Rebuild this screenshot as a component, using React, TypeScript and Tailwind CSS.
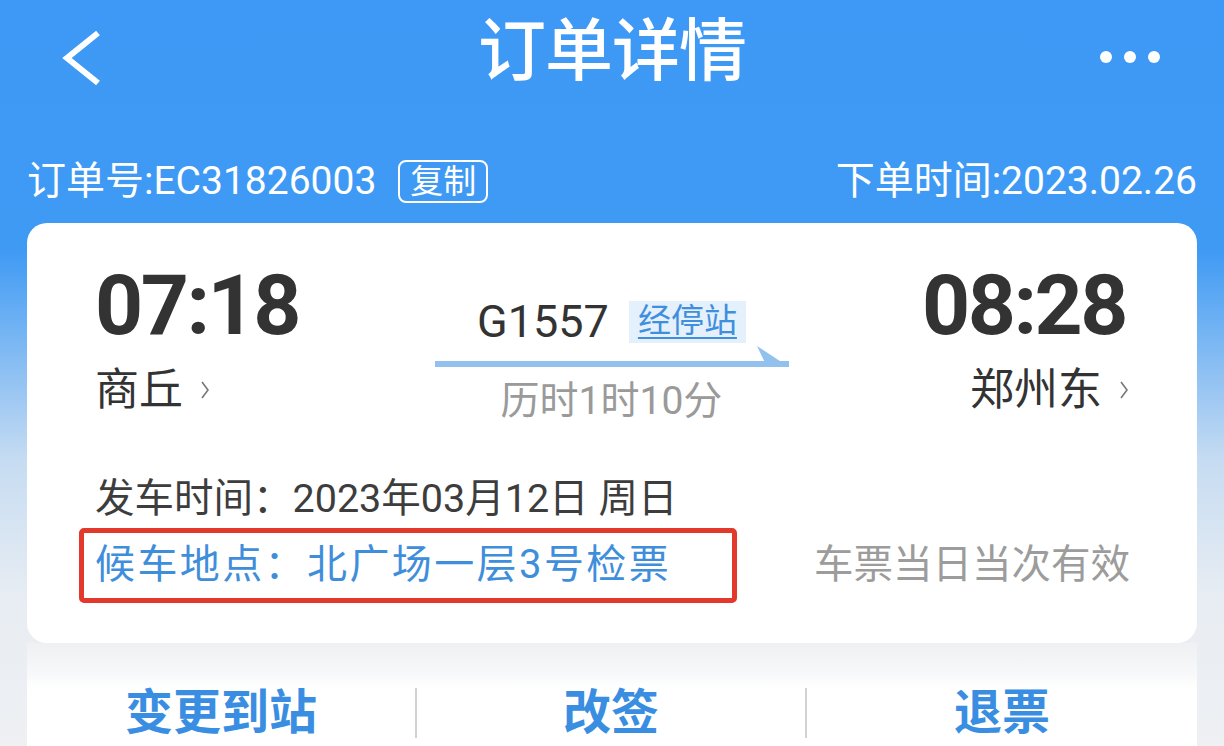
const FONT = "font-['Roboto','Noto_Sans_CJK_SC',sans-serif]"

function BackIcon() {
  return (
    <svg className="w-[44px] h-[60px] ml-[3px]" viewBox="0 0 44 60" fill="none" stroke="white" strokeWidth="6" strokeLinejoin="miter">
      <path d="M39 5L8 30l31 25" />
    </svg>
  )
}

function SmallChevron() {
  return (
    <svg className="w-[12px] h-[22px] ml-[16px]" viewBox="0 0 12 22" fill="none" stroke="#777" strokeWidth="1.6">
      <path d="M3 3l6 8-6 8" />
    </svg>
  )
}

function TrainArrow() {
  return (
    <svg className="w-[354px] h-[22px] mt-[2px]" viewBox="0 0 354 22" fill="#92c1ee">
      <rect x="0" y="15" width="354" height="6" />
      <polygon points="322,0 354,21 332,21" />
    </svg>
  )
}

export default function App() {
  return (
    <div className={`${FONT} w-[1224px] h-[746px] overflow-hidden bg-[linear-gradient(180deg,#3d99f5_0px,#3f9af4_250px,#c6dcf2_460px,#e8edf3_600px,#eef0f3_746px)]`}>
      {/* Header */}
      <div className="h-[115px] flex items-center justify-between pl-[56px] pr-[56px] relative">
        <BackIcon />
        <h1 className="absolute left-1/2 -translate-x-1/2 top-[18px] text-white text-[68px] leading-none font-medium tracking-[-1px]">订单详情</h1>
        <div className="flex gap-[12px] mr-[8px] -mt-[2px]">
          <span className="w-[12px] h-[12px] rounded-full bg-white" />
          <span className="w-[12px] h-[12px] rounded-full bg-white" />
          <span className="w-[12px] h-[12px] rounded-full bg-white" />
        </div>
      </div>

      {/* Order number row */}
      <div className="mt-[33px] h-[66px] px-[27px] flex items-center justify-between text-white text-[39px] leading-none">
        <div className="flex items-center">
          <span>订单号:EC31826003</span>
          <span className="ml-[22px] border-[2.5px] border-white rounded-[8px] px-[10px] py-[3px] text-[33px] leading-none">复制</span>
        </div>
        <span>下单时间:2023.02.26</span>
      </div>

      {/* Ticket card */}
      <div className="mt-[9px] mx-[27px] bg-white rounded-[20px] pt-[41px] pl-[68px] pr-[69px] h-[420px]">
        <div className="grid grid-cols-[1fr_354px_1fr]">
          <div>
            <p className="text-[#333] text-[84px] font-bold leading-none tracking-[-2.5px]">07:18</p>
            <div className="mt-[20px] flex items-center text-[#333] text-[44px] leading-none">
              商丘
              <SmallChevron />
            </div>
          </div>

          <div className="flex flex-col items-center pt-[35px]">
            <div className="flex items-center">
              <span className="text-[#333] text-[45px] leading-none">G1557</span>
              <span className="ml-[20px] bg-[#e4f0fc] px-[9px] pt-[3px] pb-[6px] text-[#3f8fdc] text-[33px] leading-none underline underline-offset-[5px] decoration-[2px]">经停站</span>
            </div>
            <TrainArrow />
            <p className="mt-[14px] text-[#9a9a9a] text-[39px] leading-none">历时1时10分</p>
          </div>

          <div className="flex flex-col items-end">
            <p className="text-[#333] text-[84px] font-bold leading-none tracking-[-2.5px] mr-[2px]">08:28</p>
            <div className="mt-[20px] flex items-center text-[#333] text-[44px] leading-none -mr-[2px]">
              郑州东
              <SmallChevron />
            </div>
          </div>
        </div>

        <p className="mt-[58px] text-[#3d3d3d] text-[39.5px] leading-none">发车时间：2023年03月12日 周日</p>

        <div className="mt-[9px] flex items-center justify-between">
          <div className="-ml-[16px] w-[658px] h-[75px] border-[5px] border-[#e3392c] rounded-[5px] pl-[11px] flex items-center">
            <span className="text-[#3f8edb] text-[40px] leading-none tracking-[2.4px]">候车地点：北广场一层3号检票</span>
          </div>
          <span className="text-[#9c9c9c] text-[39.5px] leading-none mr-[-2px]">车票当日当次有效</span>
        </div>
      </div>

      {/* Actions */}
      <div className="mx-[27px] h-[103px] bg-[linear-gradient(180deg,#eef0f2_0px,#f7f8f9_30px,#ffffff_45px)] grid grid-cols-3 items-end pb-[8px]">
        <div className="flex items-center justify-center h-[50px] border-r-2 border-[#d2d2d2]">
          <span className="text-[#3a8ee2] text-[48px] font-bold leading-none">变更到站</span>
        </div>
        <div className="flex items-center justify-center h-[50px] border-r-2 border-[#d2d2d2]">
          <span className="text-[#3a8ee2] text-[48px] font-bold leading-none">改签</span>
        </div>
        <div className="flex items-center justify-center h-[50px]">
          <span className="text-[#3a8ee2] text-[48px] font-bold leading-none">退票</span>
        </div>
      </div>
    </div>
  )
}
